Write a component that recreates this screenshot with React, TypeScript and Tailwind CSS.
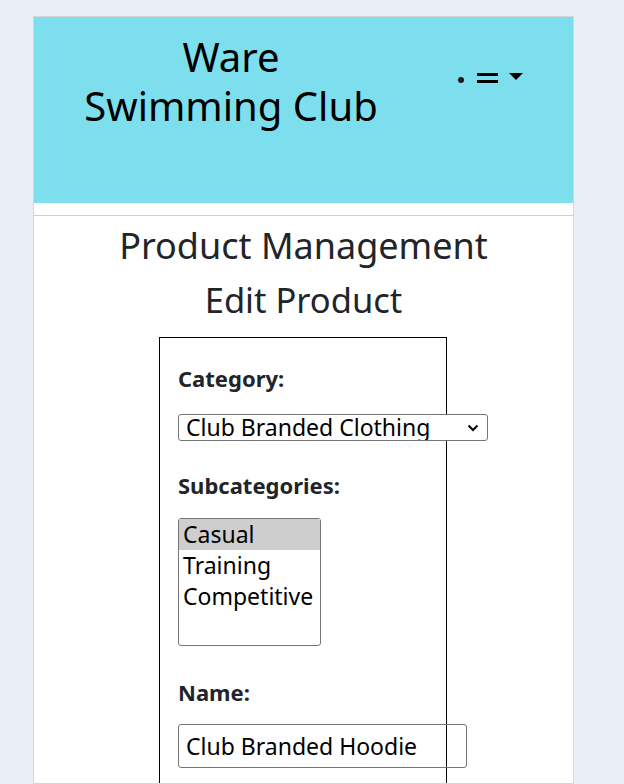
import React from "react";

const font = { fontFamily: "'Noto Sans', 'DejaVu Sans', sans-serif" };

function NavIcons() {
  return (
    <div className="flex items-start pt-[56px] pr-[50px]">
      <span className="block w-[6px] h-[6px] rounded-full bg-[#1a1a1a] mt-[4px]" />
      <span className="ml-[13px] flex flex-col gap-[4px]">
        <span className="block w-[21px] h-[3px] bg-black" />
        <span className="block w-[21px] h-[3px] bg-black" />
      </span>
      <svg width="14" height="7" viewBox="0 0 14 7" className="ml-[11px]">
        <path d="M0 0 L14 0 L7 7 Z" fill="#000" />
      </svg>
    </div>
  );
}

export default function App() {
  return (
    <div className="min-h-screen bg-[#eaeef6] pt-[16px]" style={font}>
      <div className="ml-[33px] w-[541px] h-[768px] bg-white border border-[#d6d6d6] overflow-hidden">
        {/* header */}
        <header className="flex items-start justify-between h-[186px] bg-[#7ddfed]">
          <h1 className="w-[394px] pt-[15px] text-center text-[40px] leading-[49px] text-black">
            <span className="block">Ware</span>
            <span className="block">Swimming Club</span>
          </h1>
          <NavIcons />
        </header>
        <div className="h-[12px]" />
        <hr className="border-t border-[#cfcfcf]" />

        <main className="flex flex-col items-center text-[#212529]">
          <h2 className="mt-[8px] text-[36px] leading-[44px]">Product Management</h2>
          <h3 className="mt-[12px] text-[34.5px] leading-[40px]">Edit Product</h3>

          <form className="self-start ml-[125px] mt-[17px] w-[288px] border border-black px-[18px] pt-[26px] pb-[40px]">
            <label className="block text-[22px] font-bold leading-[28px]">Category:</label>
            <div className="relative mt-[22px] w-[310px]">
              <select
                defaultValue="clothing"
                className="appearance-none block w-[310px] h-[27px] border border-[#767676] rounded-[3px] text-[23px] leading-[25px] py-0 pl-[7px] pr-[30px] text-black bg-white"
              >
                <option value="clothing">Club Branded Clothing</option>
                <option value="equipment">Swimming Equipment</option>
              </select>
              <svg
                width="12"
                height="8"
                viewBox="0 0 12 8"
                className="pointer-events-none absolute right-[9px] top-[10px]"
              >
                <path d="M1.5 1.5 L6 6 L10.5 1.5" fill="none" stroke="#000" strokeWidth="2" />
              </svg>
            </div>

            <label className="block mt-[30px] text-[22px] font-bold leading-[28px]">Subcategories:</label>
            <div className="mt-[19px] w-[143px] h-[128px] border border-[#767676] rounded-[3px] text-[23px] leading-[31px] text-black">
              <div className="bg-[#cecece] px-[4px]">Casual</div>
              <div className="px-[4px]">Training</div>
              <div className="px-[4px]">Competitive</div>
            </div>

            <label className="block mt-[32px] text-[22px] font-bold leading-[28px]">Name:</label>
            <input
              type="text"
              defaultValue="Club Branded Hoodie"
              className="mt-[18px] block w-[289px] h-[44px] border border-[#767676] rounded-[3px] px-[7px] text-[23px] text-black"
            />
          </form>
        </main>
      </div>
    </div>
  );
}
